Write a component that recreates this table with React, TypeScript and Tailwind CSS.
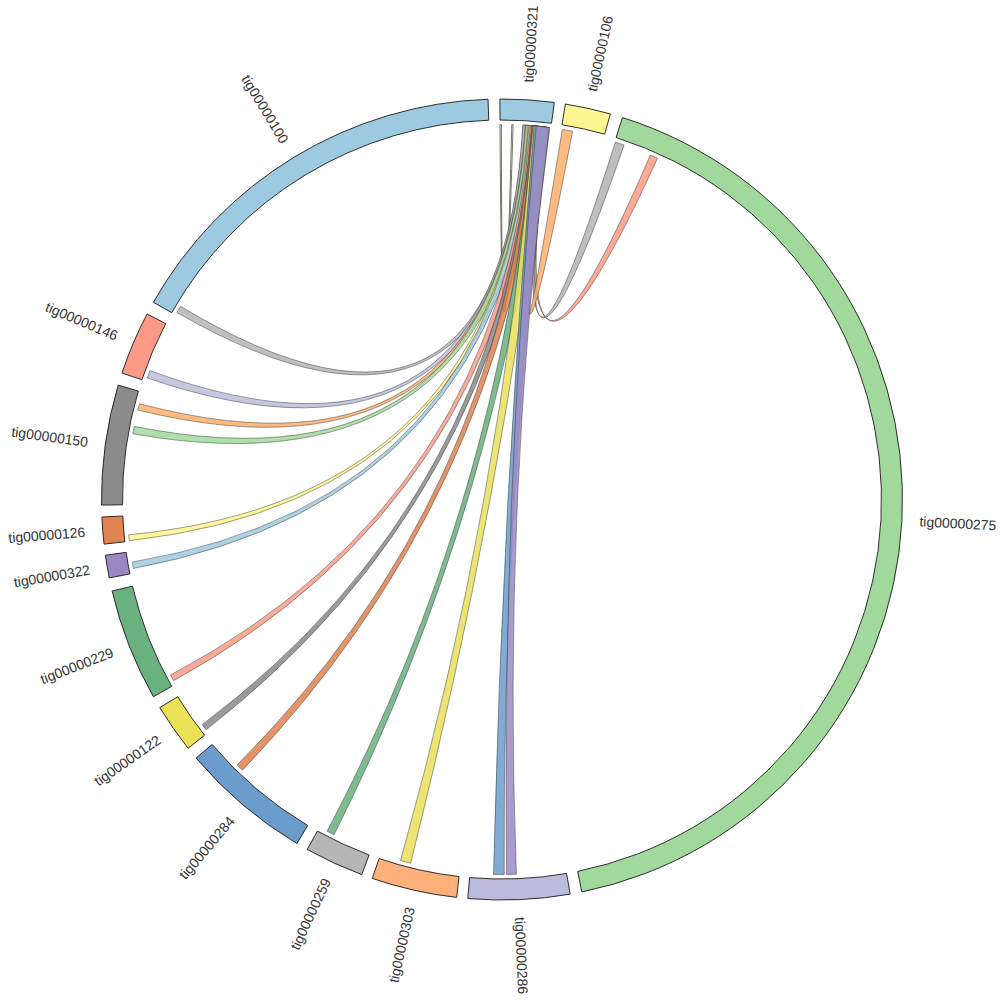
const CX = 502;
const CY = 499.5;
const R_OUT = 400.5;
const R_IN = 379.5;
const R_LINK = 375;
const R_LABEL = 418;

type Sector = { name: string; start: number; end: number; color: string };
type Link = { from: [number, number]; color: string };

// angles in degrees, clockwise from 12 o'clock
const sectors: Sector[] = [
  { name: "tig00000321", start: -0.3, end: 7.5, color: "#9ecae1" },
  { name: "tig00000106", start: 9.1, end: 15.7, color: "#fff591" },
  { name: "tig00000275", start: 17.5, end: 168.5, color: "#a1d89c" },
  { name: "tig00000286", start: 170.2, end: 184.9, color: "#bcbbdb" },
  { name: "tig00000303", start: 186.5, end: 198.9, color: "#fdb07a" },
  { name: "tig00000259", start: 200.5, end: 209.1, color: "#b6b6b6" },
  { name: "tig00000284", start: 210.8, end: 229.8, color: "#6a9ccc" },
  { name: "tig00000122", start: 231.6, end: 238.7, color: "#eae157" },
  { name: "tig00000229", start: 240.5, end: 256.8, color: "#69b17e" },
  { name: "tig00000322", start: 258.7, end: 262.0, color: "#9a88c3" },
  { name: "tig00000126", start: 263.6, end: 267.5, color: "#e28352" },
  { name: "tig00000150", start: 269.2, end: 286.6, color: "#8b8b8b" },
  { name: "tig00000146", start: 288.4, end: 297.6, color: "#fb9a86" },
  { name: "tig00000100", start: 299.5, end: 358.0, color: "#9ecae1" },
];

// every link ends on tig00000321; listed left to right along that sector
const links: Link[] = [
  { from: [299.9, 301.0], color: "#b5b5b5" },
  { from: [288.9, 290.1], color: "#bcbddc" },
  { from: [283.8, 284.8], color: "#fdae6b" },
  { from: [280.1, 281.25], color: "#a1d99b" },
  { from: [263.7, 264.6], color: "#fff58f" },
  { from: [259.4, 260.4], color: "#9ecae1" },
  { from: [241.1, 242.1], color: "#fc9b86" },
  { from: [232.1, 233.1], color: "#8a8a8a" },
  { from: [223.8, 224.95], color: "#e0804f" },
  { from: [206.6, 207.8], color: "#67af7c" },
  { from: [194.1, 195.7], color: "#e9e05a" },
  { from: [179.65, 181.3], color: "#6a9dcb" },
  { from: [177.8, 179.3], color: "#9a8bc3" },
  { from: [23.3, 24.5], color: "#fc9b86" },
  { from: [17.6, 19.0], color: "#b3b3b3" },
  { from: [9.25, 10.85], color: "#fdae6b" },
];

// ends on tig00000321 overlap: centres spread over this range
const BUNDLE_MIN = 3.2;
const BUNDLE_MAX = 7.45;
const END_SCALE = 1.35;

const pt = (r: number, deg: number) => {
  const a = (deg * Math.PI) / 180;
  return `${(CX + r * Math.sin(a)).toFixed(2)} ${(CY - r * Math.cos(a)).toFixed(2)}`;
};

function sectorPath(s: Sector) {
  const large = s.end - s.start > 180 ? 1 : 0;
  return [
    `M ${pt(R_OUT, s.start)}`,
    `A ${R_OUT} ${R_OUT} 0 ${large} 1 ${pt(R_OUT, s.end)}`,
    `L ${pt(R_IN, s.end)}`,
    `A ${R_IN} ${R_IN} 0 ${large} 0 ${pt(R_IN, s.start)}`,
    "Z",
  ].join(" ");
}

function ribbonPath(a1: number, a2: number, b1: number, b2: number) {
  const r = R_LINK;
  return [
    `M ${pt(r, a1)}`,
    `A ${r} ${r} 0 0 1 ${pt(r, a2)}`,
    `Q ${CX} ${CY} ${pt(r, b1)}`,
    `A ${r} ${r} 0 0 1 ${pt(r, b2)}`,
    `Q ${CX} ${CY} ${pt(r, a1)}`,
    "Z",
  ].join(" ");
}

function Label({ s }: { s: Sector }) {
  const mid = (s.start + s.end) / 2;
  const a = (mid * Math.PI) / 180;
  const x = CX + R_LABEL * Math.sin(a);
  const y = CY - R_LABEL * Math.cos(a);
  const right = mid >= 0 && mid < 180;
  const rot = right ? mid - 90 : mid - 270;
  return (
    <text
      x={x}
      y={y}
      transform={`rotate(${rot.toFixed(2)} ${x.toFixed(2)} ${y.toFixed(2)})`}
      textAnchor={right ? "start" : "end"}
      dominantBaseline="central"
    >
      {s.name}
    </text>
  );
}

export default function App() {
  const n = links.length;
  const ribbons = links.map((l, i) => {
    const near = l.from[0] < 90;
    const w = (l.from[1] - l.from[0]) * (near ? 0.6 : END_SCALE);
    const lo = BUNDLE_MIN + w / 2;
    const hi = BUNDLE_MAX - w / 2;
    const c = Math.min(hi, Math.max(lo, BUNDLE_MIN + 0.6 + (i * (BUNDLE_MAX - BUNDLE_MIN - 1.2)) / (n - 1)));
    return { d: ribbonPath(c - w / 2, c + w / 2, l.from[0], l.from[1]), color: l.color, near };
  });
  // the short loops back to 106 / 275 sit underneath the long links
  const ordered = [...ribbons.filter((r) => r.near), ...ribbons.filter((r) => !r.near)];

  return (
    <div className="w-[1000px] h-[1000px] bg-white overflow-hidden">
      <svg width={1000} height={1000} viewBox="0 0 1000 1000" className="block">
        {/* self link on tig00000321 */}
        <path
          d={ribbonPath(-0.3, -0.1, 1.5, 1.7)}
          fill="#ffffff"
          stroke="#3a3a20"
          strokeWidth={0.7}
        />
        {ordered.map((r, i) => (
          <path
            key={i}
            d={r.d}
            fill={r.color}
            fillOpacity={0.85}
            stroke="#2a2a2a"
            strokeOpacity={0.75}
            strokeWidth={0.6}
          />
        ))}
        {sectors.map((s) => (
          <path key={s.name} d={sectorPath(s)} fill={s.color} stroke="#1a1a1a" strokeWidth={0.9} />
        ))}
        <g fill="#333333" className="font-['Liberation_Sans',Arial,sans-serif] text-[14px]">
          {sectors.map((s) => (
            <Label key={s.name} s={s} />
          ))}
        </g>
      </svg>
    </div>
  );
}
